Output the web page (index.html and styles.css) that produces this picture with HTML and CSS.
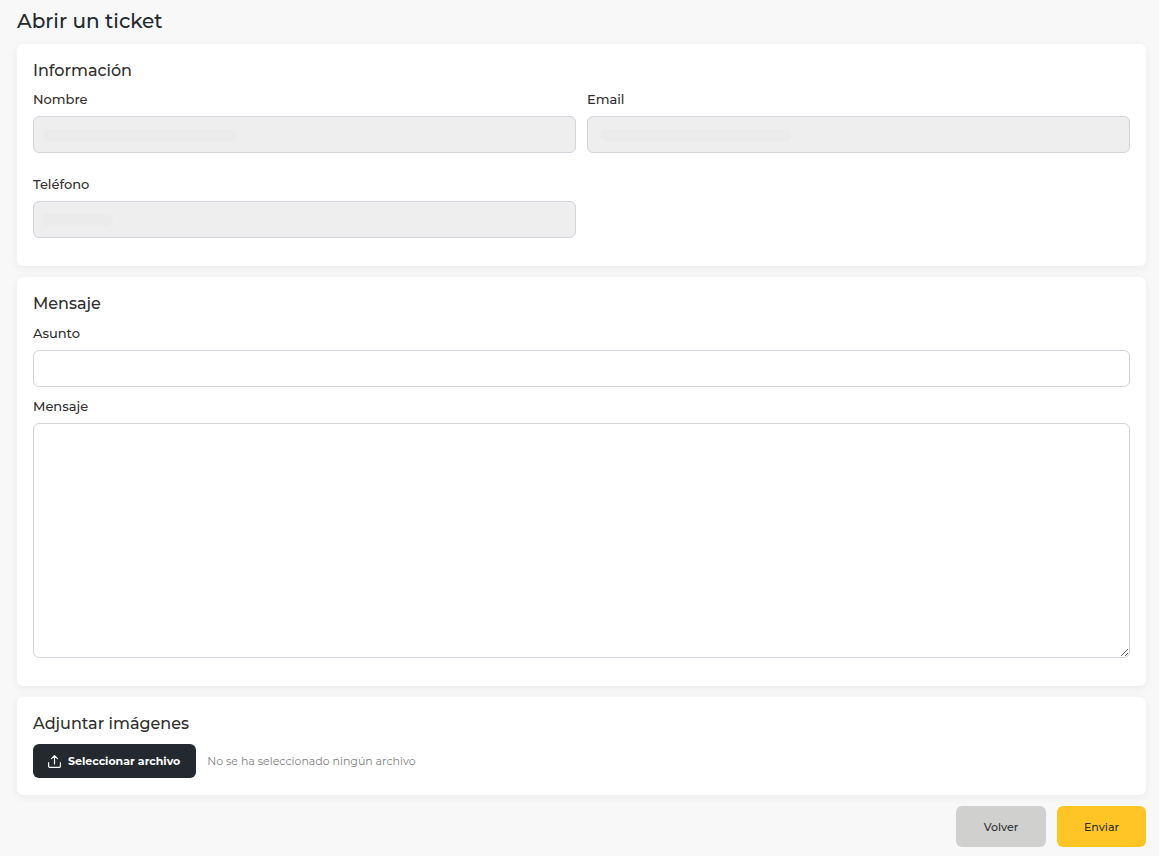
FILE: index.html
```html
<!DOCTYPE html>
<html lang="es">
<head>
<meta charset="utf-8">
<meta name="viewport" content="width=device-width, initial-scale=1">
<title>Abrir un ticket</title>
<link rel="stylesheet" href="styles.css">
</head>
<body>
<main class="page">
  <h1 class="page-title">Abrir un ticket</h1>
  <form class="ticket-form">
    <section class="card">
      <h2 class="card-title">Información</h2>
      <div class="field-grid">
        <div class="field">
          <label class="field-label" for="nombre">Nombre</label>
          <div class="masked masked-name"><input class="control" id="nombre" type="text" disabled></div>
        </div>
        <div class="field">
          <label class="field-label" for="email">Email</label>
          <div class="masked masked-email"><input class="control" id="email" type="email" disabled></div>
        </div>
        <div class="field">
          <label class="field-label" for="telefono">Teléfono</label>
          <div class="masked masked-phone"><input class="control" id="telefono" type="tel" disabled></div>
        </div>
      </div>
    </section>

    <section class="card">
      <h2 class="card-title">Mensaje</h2>
      <div class="field-stack">
        <div class="field">
          <label class="field-label" for="asunto">Asunto</label>
          <input class="control" id="asunto" type="text">
        </div>
        <div class="field">
          <label class="field-label" for="mensaje">Mensaje</label>
          <textarea class="control control-area" id="mensaje"></textarea>
        </div>
      </div>
    </section>

    <section class="card card-upload">
      <h2 class="card-title">Adjuntar imágenes</h2>
      <div class="upload">
        <input class="upload-input" id="archivo" type="file" accept="image/*">
        <label class="upload-button" for="archivo">
          <svg class="upload-icon" viewBox="0 0 13 13" aria-hidden="true">
            <path d="M6.5 9V1M3.5 3.7L6.5 0.7L9.5 3.7M0.6 7.5V11.2Q0.6 12.4 1.8 12.4H11.2Q12.4 12.4 12.4 11.2V7.5"/>
          </svg>
          <span>Seleccionar archivo</span>
        </label>
        <span class="upload-status">No se ha seleccionado ningún archivo</span>
      </div>
    </section>

    <div class="actions">
      <button class="button button-back" type="button">Volver</button>
      <button class="button button-send" type="submit">Enviar</button>
    </div>
  </form>
</main>
</body>
</html>
```

FILE: styles.css
```css
* {
  box-sizing: border-box;
}

body {
  margin: 0;
  background: #f8f8f8;
  color: #2f2f2d;
  font-family: Montserrat, Inter, "Open Sans", sans-serif;
}

.page {
  padding: 8px 13px 9px 17px;
}

.page-title {
  margin: 0 0 10px;
  color: #23292f;
  font-size: 20px;
  font-weight: 500;
  line-height: 26px;
}

.ticket-form {
  display: flex;
  flex-direction: column;
  gap: 11px;
}

.card {
  padding: 16px 16px 28px;
  border-radius: 6px;
  background: #fff;
  box-shadow: 0 2px 10px rgba(0, 0, 0, 0.06);
}

.card-upload {
  padding-bottom: 17px;
}

.card-title {
  margin: 0 0 8px;
  font-size: 16px;
  font-weight: 500;
  line-height: 22px;
}

.field-grid {
  display: grid;
  grid-template-columns: 1fr 1fr;
  gap: 22px 11px;
}

.field-stack {
  display: flex;
  flex-direction: column;
  gap: 10px;
  padding-top: 1px;
}

.field {
  display: flex;
  flex-direction: column;
  gap: 8px;
}

.field-label {
  font-size: 13px;
  font-weight: 500;
  line-height: 18px;
}

.control {
  display: block;
  width: 100%;
  height: 37px;
  padding: 8px 12px;
  border: 1px solid #d3d4dc;
  border-radius: 6px;
  background: #fff;
  color: inherit;
  font: inherit;
  font-size: 13px;
}

.control:disabled {
  background: #eee;
}

.control-area {
  height: 235px;
  resize: vertical;
}

.masked {
  position: relative;
}

.masked::after {
  content: "";
  position: absolute;
  top: 13px;
  left: 10px;
  width: 193px;
  height: 13px;
  border-radius: 7px;
  background: #ebebeb;
}

.masked-email::after {
  left: 13px;
  width: 191px;
}

.masked-phone::after {
  top: 12px;
  left: 8px;
  width: 72px;
}

.upload {
  display: flex;
  align-items: center;
  gap: 11px;
  padding-top: 1px;
}

.upload-input {
  position: absolute;
  width: 1px;
  height: 1px;
  overflow: hidden;
  opacity: 0;
}

.upload-button {
  display: flex;
  align-items: center;
  gap: 7px;
  height: 34px;
  padding: 0 16px 0 15px;
  border-radius: 6px;
  background: #23292f;
  color: #fff;
  font-size: 11px;
  font-weight: 700;
  cursor: pointer;
}

.upload-icon {
  width: 13px;
  height: 13px;
  fill: none;
  stroke: #fff;
  stroke-width: 1.2;
  stroke-linecap: round;
  stroke-linejoin: round;
}

.upload-status {
  color: #80807e;
  font-size: 11px;
}

.actions {
  display: flex;
  justify-content: flex-end;
  gap: 11px;
}

.button {
  min-width: 89px;
  height: 41px;
  padding: 0 24px;
  border: 0;
  border-radius: 6px;
  color: #2f2f2d;
  font: inherit;
  font-size: 11px;
  font-weight: 500;
  cursor: pointer;
}

.button-back {
  min-width: 90px;
  background: #d0d0ce;
}

.button-send {
  background: #ffc527;
}
```
